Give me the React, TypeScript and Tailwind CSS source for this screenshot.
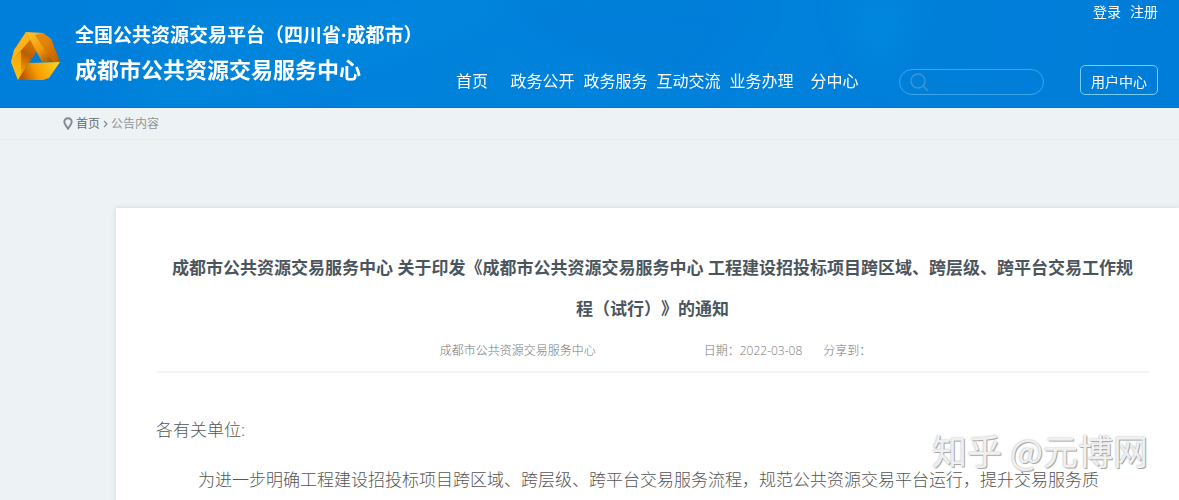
import React from "react";

const navItems = [
  { label: "首页", layout: "w-[50px] text-left" },
  { label: "政务公开", layout: "w-[73px] text-center" },
  { label: "政务服务", layout: "w-[73px] text-center" },
  { label: "互动交流", layout: "w-[73px] text-center" },
  { label: "业务办理", layout: "w-[73px] text-center" },
  { label: "分中心", layout: "w-[73px] text-center" },
];

function Logo() {
  return (
    <svg width="50" height="50" viewBox="0 0 50 50" aria-hidden="true" className="shrink-0">
      <defs>
        <linearGradient id="left" x1="0.7" y1="0" x2="0.3" y2="1">
          <stop offset="0" stopColor="#e88400" />
          <stop offset="0.45" stopColor="#b95e00" />
          <stop offset="0.7" stopColor="#e88a00" />
          <stop offset="1" stopColor="#ffc000" />
        </linearGradient>
        <linearGradient id="right" x1="0" y1="0" x2="1" y2="1">
          <stop offset="0" stopColor="#ffc52e" />
          <stop offset="0.5" stopColor="#f09a0c" />
          <stop offset="1" stopColor="#8c3b00" />
        </linearGradient>
        <linearGradient id="bottom" x1="0" y1="0.4" x2="1" y2="0.2">
          <stop offset="0" stopColor="#b95400" />
          <stop offset="0.4" stopColor="#f89c00" />
          <stop offset="1" stopColor="#ffd21f" />
        </linearGradient>
      </defs>
      <path d="M15 1 L3 19 L0 31 L7 49 L26 20 Z" fill="url(#left)" />
      <path d="M15 1 L3 19 L0 31 L19 9 Z" fill="#ffb31a" />
      <path d="M0 31 L10 20 L10 42 L7 49 Z" fill="#ffbe12" opacity="0.75" />
      <path d="M15 1 L32 2 L40 8 L49 31 L31 31 Z" fill="url(#right)" />
      <path d="M32 2 L40 8 L49 31 L42 31 L24 4 Z" fill="#d97200" opacity="0.6" />
      <path d="M18 32 L49 31 L38 47 L32 49 L7 49 Z" fill="url(#bottom)" />
    </svg>
  );
}

function PinIcon() {
  return (
    <svg width="10" height="13" viewBox="0 0 10 13" aria-hidden="true">
      <path
        d="M5 1.2a3.7 3.7 0 0 0-3.7 3.7C1.3 7.2 3.7 9.3 5 11.7 6.3 9.3 8.7 7.2 8.7 4.9A3.7 3.7 0 0 0 5 1.2Z"
        fill="none"
        stroke="#848a8e"
        strokeWidth="1.9"
      />
    </svg>
  );
}

function Header() {
  return (
    <header className="relative flex h-[108px] shrink-0 items-stretch overflow-hidden border-b border-[#0872c4] bg-linear-to-r from-[#007fda] via-[#0083dc] to-[#007dd8] pr-[21px] pl-[11px] text-white">
      <svg
        className="absolute inset-0 h-full w-full"
        viewBox="0 0 1179 108"
        preserveAspectRatio="none"
        aria-hidden="true"
      >
        <defs>
          <filter id="soft" x="-20%" y="-50%" width="140%" height="200%">
            <feGaussianBlur stdDeviation="14" />
          </filter>
        </defs>
        <g filter="url(#soft)">
          <path d="M200 0H520L390 60L210 108H120Z" fill="#0b90e2" opacity="0.3" />
          <path d="M500 0H760L700 90L560 50Z" fill="#0077d4" opacity="0.4" />
          <path d="M840 0H920L880 80Z" fill="#0c90e0" opacity="0.4" />
        </g>
      </svg>
      <div className="relative flex flex-1 gap-[14px]">
        <div className="pt-[31px]">
          <Logo />
        </div>
        <div className="pt-[21px] font-bold whitespace-nowrap">
          <p className="text-[19px] leading-[28px]">全国公共资源交易平台（四川省·成都市）</p>
          <h1 className="mt-[4px] text-[22px] leading-[32px]">成都市公共资源交易服务中心</h1>
        </div>
      </div>
      <div className="relative flex flex-col items-end justify-between pb-[12px]">
        <div className="flex gap-[9px] text-[14px] leading-[24px]">
          <a href="#login">登录</a>
          <a href="#register">注册</a>
        </div>
        <div className="flex items-end">
          <nav className="flex pb-[1px] text-[16px] leading-[26px] whitespace-nowrap">
            {navItems.map((item) => (
              <a key={item.label} href="#nav" className={item.layout}>
                {item.label}
              </a>
            ))}
          </nav>
          <label className="ml-[28px] flex h-[26px] w-[145px] items-center gap-1 rounded-full border border-[#3ba5ee] px-[10px]">
            <svg width="19" height="19" viewBox="0 0 19 19" fill="none" stroke="#3c95d2" strokeWidth="1.5" aria-hidden="true">
              <circle cx="8" cy="8" r="7" />
              <path d="M13 13L18 18" />
            </svg>
            <input type="search" aria-label="搜索" className="w-0 flex-1 bg-transparent text-[14px] outline-none" />
          </label>
          <button type="button" className="ml-[36px] h-[30px] w-[78px] rounded-[5px] border border-[#74cdfa] pt-[2px] text-[14px]">
            用户中心
          </button>
        </div>
      </div>
    </header>
  );
}

export default function App() {
  return (
    <div className="relative flex h-screen flex-col overflow-hidden bg-[#edf2f5] font-['Open_Sans','Noto_Sans_CJK_SC',sans-serif] [text-spacing-trim:space-all]">
      <Header />
      <nav aria-label="面包屑" className="flex h-[32px] shrink-0 items-center gap-[3px] border-b border-[#e9edf0] pl-[63px] text-[12px] text-[#8f9498]">
        <PinIcon />
        <a href="#home" className="text-[#666b70]">首页</a>
        <svg width="5" height="8" viewBox="0 0 5 8" fill="none" stroke="#848a8e" strokeWidth="1.2" aria-hidden="true">
          <path d="M1 1L4 4L1 7" />
        </svg>
        <span>公告内容</span>
      </nav>
      <main className="mt-[68px] ml-[116px] flex-1 bg-white pr-[30px] pl-[40px] shadow-[0_0_5px_rgba(80,100,110,0.2)]">
        <article>
          <h2 className="px-[12px] pt-[39px] text-center text-[17px] leading-[41px] font-bold text-[#4b555d]">
            成都市公共资源交易服务中心 关于印发《成都市公共资源交易服务中心 工程建设招投标项目跨区域、跨层级、跨平台交易工作规程（试行）》的通知
          </h2>
          <div className="flex h-[44px] justify-center border-b-2 border-[#f4f5f5] pt-[12px] pl-[6px] text-[12px] leading-[20px] font-light text-[#777777]">
            <span>成都市公共资源交易服务中心</span>
            <span className="ml-[108px]">日期：2022-03-08</span>
            <span className="ml-[21px]">分享到：</span>
          </div>
          <div className="pt-[32px] text-[17px] leading-[50px] font-light text-[#555555]">
            <p>各有关单位:</p>
            <p className="indent-[42px] whitespace-nowrap">
              为进一步明确工程建设招投标项目跨区域、跨层级、跨平台交易服务流程，规范公共资源交易平台运行，提升交易服务质
            </p>
          </div>
        </article>
      </main>
      <div className="pointer-events-none absolute right-[31px] bottom-[32px] font-['Noto_Sans_CJK_SC',sans-serif] text-[35px] leading-[36px] whitespace-nowrap text-[#f0f0f0] [text-shadow:1px_1px_0_#aaa,0_0_2px_#aaa]">
        知乎 @元博网
      </div>
    </div>
  );
}
